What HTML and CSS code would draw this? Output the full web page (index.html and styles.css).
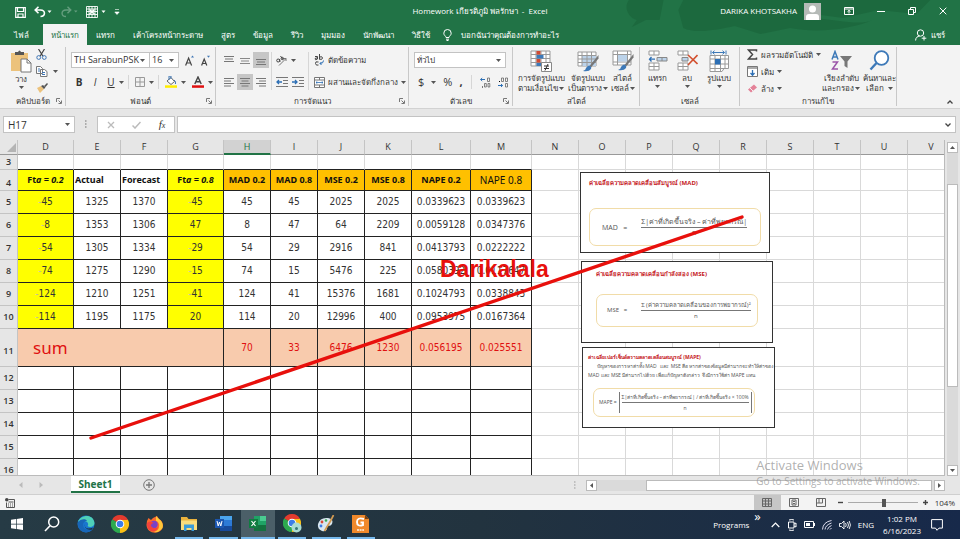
FILE: index.html
```html
<!DOCTYPE html>
<html lang="th">
<head>
<meta charset="utf-8">
<title>Homework - Excel</title>
<link rel="stylesheet" href="styles.css">
</head>
<body>
<svg class="defs" aria-hidden="true">
  <symbol id="caret" viewBox="0 0 5 5"><path d="M0 1h5L2.500 4z" fill="#555"/></symbol>
  <symbol id="launch" viewBox="0 0 6 6"><path d="M.5 4V.5H4M2.500 2.500L5 5M5.500 2.500v3h-3" fill="none" stroke="#777"/></symbol>
  <symbol id="chrome" viewBox="0 0 18 18"><path d="M9 9L1.200 4.500A9 9 0 0 1 16.800 4.500z" fill="#e33b2e"/><path d="M9 9l7.800-4.500A9 9 0 0 1 9 18z" fill="#fbc116"/><path d="M9 9v9A9 9 0 0 1 1.200 4.500z" fill="#2da94f"/><path d="M9 5h7.800L9 18l3.500-7z" fill="#fbc116"/><path d="M1.200 4.500L5.500 11 9 13l-2 4.700A9 9 0 0 1 1.200 4.500z" fill="#2da94f"/><circle cx="9" cy="9" r="4.300" fill="#fff"/><circle cx="9" cy="9" r="3.300" fill="#3c7de8"/></symbol>
</svg>

<header class="top">
  <svg class="clouds" viewBox="0 0 340 45" preserveAspectRatio="none" aria-hidden="true"><path d="M5 0c-6 8 0 18 8 20l-5 7 14-7 14 0 4-20zM60 28c12 6 34 2 52-2l26 8 30-6c30 6 66 0 84-8-14 6-34 0-62-2l4-18H60l-5 10z" fill="#1b653b"/><path d="M190 0h120l-14 14-38-4-36 8-30-4z" fill="#1b653b"/></svg>
  <div class="titlebar">
    <div class="quick">
      <button aria-label="Save"><svg width="11" height="11" viewBox="0 0 11 11"><path d="M.7.7h9.600v9.600H.7zM2.500 1v3.500h6V1M3 10V7h5v3" fill="none" stroke="#fff" stroke-width="1.200"/></svg></button>
      <button aria-label="Undo"><svg width="18" height="12" viewBox="0 0 18 12"><path d="M1 4h5.500C12 4 11.500 10.500 6.500 10.500M4.500.7L1.200 4l3.300 3.300" fill="none" stroke="#fff" stroke-width="1.600"/><path d="M13.500 4.500h4l-2 2.500z" fill="#fff"/></svg></button>
      <button aria-label="Redo"><svg width="18" height="12" viewBox="0 0 18 12"><g opacity=".3"><path d="M11 4H6C.5 4 1 10.500 6 10.500M7.500.7L10.800 4 7.500 7.300" fill="none" stroke="#fff" stroke-width="1.400"/><path d="M14 4.500h3.500l-1.700 2z" fill="#fff"/></g></svg></button>
      <button aria-label="Table"><svg width="20" height="12" viewBox="0 0 20 12"><path d="M.5.500h11v11H.5zM.5 3h11M.5 5.500h11M.5 8.500h11M3 0v12M6 0v12M9 0v12" fill="none" stroke="#fff" stroke-width=".9"/><path d="M3.500 3.500l5 4.500M8.500 3.500l-5 4.500" stroke="#fff" stroke-width="1.500"/><path d="M15.500 4.500h4l-2 2.500z" fill="#fff"/></svg></button>
      <button aria-label="Customize"><svg width="6" height="8" viewBox="0 0 6 8"><path d="M1 1.500h4M.8 4h4.400L3 6.500z" fill="#fff" stroke="#fff" stroke-width=".6"/></svg></button>
    </div>
    <h1>Homework เกียรติภูมิ พลรักษา &nbsp;-&nbsp; Excel</h1>
    <div class="window">
      <span>DARIKA KHOTSAKHA</span>
      <svg width="17" height="17" viewBox="0 0 17 17"><path d="M0 0h17v17H0z" fill="#b5bab7"/><circle cx="8.500" cy="6" r="3.500" fill="#fff"/><path d="M2 17v-3q0-3 3-3h7q3 0 3 3v3z" fill="#fff"/></svg>
      <button aria-label="Ribbon options"><svg width="10" height="8" viewBox="0 0 10 8"><path d="M.5.500h9v7h-9zM.5 2h9M5 6.500V3.500M3.500 4.700L5 3.300l1.500 1.400" fill="none" stroke="#fff"/></svg></button>
      <button aria-label="Minimize"><svg width="8" height="8" viewBox="0 0 8 8"><path d="M0 4.500h8" stroke="#fff"/></svg></button>
      <button aria-label="Restore"><svg width="8" height="8" viewBox="0 0 8 8"><path d="M.5 2.500h5v5h-5zM2.500 2V.5h5v5H6" fill="none" stroke="#fff"/></svg></button>
      <button aria-label="Close"><svg width="8" height="8" viewBox="0 0 8 8"><path d="M.7.7l6.600 6.600M7.300.7L.7 7.300" stroke="#fff"/></svg></button>
    </div>
  </div>
  <nav class="tabs">
    <button class="file">ไฟล์</button><button class="active">หน้าแรก</button><button>แทรก</button><button>เค้าโครงหน้ากระดาษ</button><button>สูตร</button><button>ข้อมูล</button><button>รีวิว</button><button>มุมมอง</button><button>นักพัฒนา</button><button>วิธีใช้</button>
    <button class="tell"><svg width="9" height="12" viewBox="0 0 9 12"><path d="M3 8.500C3 7 .8 6.500.8 4.200a3.700 3.700 0 0 1 7.400 0C8.200 6.500 6 7 6 8.500zM3 10.200h3M3.500 11.500h2" fill="none" stroke="#fff"/></svg>บอกฉันว่าคุณต้องการทำอะไร</button>
    <button class="share"><svg width="12" height="12" viewBox="0 0 12 12"><circle cx="5.500" cy="4" r="3.200" fill="none" stroke="#fff"/><path d="M.6 11.500c0-3 2-4.300 4-4.300M9 7v4.500M6.700 9.200h4.600" fill="none" stroke="#fff"/></svg>แชร์</button>
  </nav>
</header>

<section class="ribbon">
  <div class="group g-clip">
    <div class="body">
      <button class="big"><svg width="22" height="23" viewBox="0 0 22 23"><path d="M1 3h17v18H1z" fill="#ecc27c"/><path d="M5 2h3q1.500-3 3 0h3v3H5z" fill="#555"/><path d="M11 9h6l4 4v9H11z" fill="#fff" stroke="#777"/><path d="M17 9v4h4" fill="none" stroke="#777"/></svg><span>วาง</span><svg class="car"><use href="#caret"/></svg></button>
      <div class="stack">
        <button aria-label="Cut"><svg width="11" height="11" viewBox="0 0 11 11"><path d="M2.500 0l4.300 7M8.500 0L4.200 7" stroke="#444" stroke-width="1.200"/><circle cx="2.700" cy="8.500" r="1.900" fill="none" stroke="#3f76b5"/><circle cx="8.300" cy="8.500" r="1.900" fill="none" stroke="#3f76b5"/></svg></button>
        <button aria-label="Copy"><svg width="12" height="11" viewBox="0 0 12 11"><path d="M.5.500h4l2 2v5h-6zM4.500 3.500h4l2.500 2v5H4.500z" fill="#fff" stroke="#777"/><path d="M2 3h2M2 5h2M6 6.500h3M6 8.500h3" stroke="#3f76b5"/></svg><svg class="car"><use href="#caret"/></svg></button>
        <button aria-label="Format painter"><svg width="12" height="10" viewBox="0 0 12 10"><path d="M1 5l4-2 3 3-4 4z" fill="#ecc27c"/><path d="M5 3l2-1 2.500 2.500-1.500 1.500zM8 3l3-3 1 1-2.500 3z" fill="#555"/></svg></button>
      </div>
    </div>
    <footer>คลิปบอร์ด<svg class="launch"><use href="#launch"/></svg></footer>
  </div>

  <div class="group g-font">
    <div class="body rows">
      <div class="line">
        <label class="combo fontname"><select aria-label="Font"><option>TH SarabunPSK</option></select><svg class="car"><use href="#caret"/></svg></label><label class="combo fontsize"><select aria-label="Font size"><option>16</option></select><svg class="car"><use href="#caret"/></svg></label>
        <button class="grow" aria-label="Grow font"><svg width="9" height="11" viewBox="0 0 9 11"><path d="M.6 10.500L3.600 3l3 7.500M1.700 8h3.800" fill="none" stroke="#444" stroke-width="1.200"/><path d="M6 2.500h3L7.500.500z" fill="#3f76b5"/></svg></button>
        <button aria-label="Shrink font"><svg width="9" height="11" viewBox="0 0 9 11"><path d="M.6 10.500L3.200 4l2.600 6.500M1.500 8.500h3.400" fill="none" stroke="#444" stroke-width="1.200"/><path d="M6 .7h3L7.500 2.700z" fill="#3f76b5"/></svg></button>
      </div>
      <div class="line">
        <button class="letter"><b>B</b></button><button class="letter"><i>I</i></button><button class="letter"><u>U</u></button><svg class="car"><use href="#caret"/></svg><i class="sep"></i>
        <svg class="ic" width="10" height="10" viewBox="0 0 10 10"><path d="M.5.500h9v9h-9zM5 0v10M0 5h10" fill="none" stroke="#999"/></svg><svg class="car"><use href="#caret"/></svg><i class="sep"></i>
        <svg class="ic" width="12" height="12" viewBox="0 0 12 12"><path d="M2 5l4-3.500 3.500 4L6 8.500z" fill="#fff" stroke="#666"/><path d="M4 4V0h2v3M9 4q2 1 1.500 4" fill="none" stroke="#3f76b5"/><path d="M0 9.300h12v2.500H0z" fill="#ffed00"/></svg><svg class="car"><use href="#caret"/></svg>
        <svg class="ic" width="12" height="12" viewBox="0 0 12 12"><path d="M2.800 8L6 1l3.200 7M4 5.700h4" fill="none" stroke="#444" stroke-width="1.400"/><path d="M0 9.300h12v2.500H0z" fill="#e01010"/></svg><svg class="car"><use href="#caret"/></svg>
      </div>
    </div>
    <footer>ฟอนต์<svg class="launch"><use href="#launch"/></svg></footer>
  </div>

  <div class="group g-align">
    <div class="body cols">
      <div class="aligns">
        <button aria-label="Top"><svg width="10" height="10" viewBox="0 0 10 10"><path d="M0 1.500h10M1 4h8M0 6.500h10" stroke="#777"/></svg></button><button aria-label="Middle"><svg width="10" height="10" viewBox="0 0 10 10"><path d="M0 3.500h10M1 6h8M0 8.500h10" stroke="#888"/></svg></button><button class="on" aria-label="Bottom"><svg width="10" height="10" viewBox="0 0 10 10"><path d="M0 4.500h10M1 7h8M0 9.500h10" stroke="#777"/></svg></button>
        <button aria-label="Left"><svg width="10" height="10" viewBox="0 0 10 10"><path d="M0 1.500h10M0 4h7M0 6.500h10M0 9h7" stroke="#777"/></svg></button><button class="on" aria-label="Center"><svg width="10" height="10" viewBox="0 0 10 10"><path d="M0 1.500h10M1.500 4h7M0 6.500h10M1.500 9h7" stroke="#777"/></svg></button><button aria-label="Right"><svg width="10" height="10" viewBox="0 0 10 10"><path d="M0 1.500h10M3 4h7M0 6.500h10M3 9h7" stroke="#777"/></svg></button>
      </div>
      <div class="orient">
        <div><svg width="11" height="11" viewBox="0 0 11 11"><path d="M3 10.500L10 3.500M7.500 3.500H10V6" fill="none" stroke="#777"/><circle cx="2.200" cy="5.500" r="1.500" fill="none" stroke="#444"/><path d="M4 7L3.500 4M4.500 1l2.500 3.500" stroke="#444"/><circle cx="6.300" cy="3.500" r="1.200" fill="none" stroke="#444"/></svg><svg class="car"><use href="#caret"/></svg></div>
        <div><svg width="12" height="10" viewBox="0 0 12 10"><path d="M0 .5h12M7 3.500h5M7 6.500h5M0 9.500h12" stroke="#777"/><path d="M6 5H1M3 3L1 5l2 2" fill="none" stroke="#2c6fb5" stroke-width="1.300"/></svg><svg width="12" height="10" viewBox="0 0 12 10"><path d="M0 .5h12M7 3.500h5M7 6.500h5M0 9.500h12" stroke="#777"/><path d="M0 5h5M3 3l2 2-2 2" fill="none" stroke="#2c6fb5" stroke-width="1.300"/></svg></div>
      </div>
      <div class="wraps">
        <button><svg width="11" height="12" viewBox="0 0 11 12"><path d="M3.500 5V2.500H1M3.500 4Q1 3.500 1 5t2.500 0M5.500 0v5.500M5.500 3q3-1 3 1t-3 1.200M4.500 8Q1 7 1.500 9.500T4.500 11" fill="none" stroke="#444"/><path d="M9.500 6.500q0 3-3.500 3M7.500 8L6 9.500 7.500 11" fill="none" stroke="#2c6fb5"/></svg>ตัดข้อความ</button>
        <button><svg width="11" height="11" viewBox="0 0 11 11"><path d="M.5.500h10v10H.5zM.5 3h10M.5 8h10M5.500.500V3M5.500 8v2.500" fill="#fff" stroke="#777"/><path d="M2 5.500h7M3.300 4.300L2 5.500l1.300 1.200M7.700 4.300L9 5.500 7.700 6.700" fill="none" stroke="#2c6fb5" stroke-width=".8"/></svg>ผสานและจัดกึ่งกลาง<svg class="car"><use href="#caret"/></svg></button>
      </div>
    </div>
    <footer>การจัดแนว<svg class="launch"><use href="#launch"/></svg></footer>
  </div>

  <div class="group g-num">
    <div class="body rows">
      <div class="line"><label class="combo numfmt"><select aria-label="Number format"><option>ทั่วไป</option></select><svg class="car"><use href="#caret"/></svg></label></div>
      <div class="line nums"><button>$</button><svg class="car"><use href="#caret"/></svg><button>%</button><button><b>,</b></button><i class="sep"></i>
        <svg width="11" height="11" viewBox="0 0 11 11"><path d="M5 2.500H.5M2.200 1L.6 2.500 2.200 4" fill="none" stroke="#2c6fb5"/><path d="M7.500 1h2v3.500h-2zM4.500 6.500h1.800v3.500H4.500zM8 6.500h1.800v3.500H8z" fill="none" stroke="#666" stroke-width=".8"/><path d="M2 9.500h1v1H2z"/></svg>
        <svg width="11" height="11" viewBox="0 0 11 11"><path d="M0 8.500h4.500M3 7l1.600 1.500L3 10" fill="none" stroke="#2c6fb5"/><path d="M3.500 1h2v3.500h-2zM7.500 1h2v3.500h-2zM7.500 6.500h2V10h-2z" fill="none" stroke="#666" stroke-width=".8"/><path d="M1 4h1v1H1z"/></svg></div>
    </div>
    <footer>ตัวเลข<svg class="launch"><use href="#launch"/></svg></footer>
  </div>

  <div class="group g-style">
    <div class="body bigs">
      <button class="big"><svg width="22" height="22" viewBox="0 0 22 22"><path d="M1 1h19v15H1zM1 4.500h19M1 8.500h19M1 12.500h19M6 1v15M11 1v15M16 1v15" fill="#fff" stroke="#999"/><path d="M6.500 1h4v3.500h-4zM6.500 9h4v3.500h-4z" fill="#cf4a33"/><path d="M6.500 5h7v3.500h-7zM6.500 13h5v3h-5z" fill="#3d79b8"/><path d="M11.500 12.500h10v9h-10z" fill="#fff" stroke="#888"/><path d="M14 16h5M14 18.500h5M18 14l-3 6.500" stroke="#333"/></svg><span>การจัดรูปแบบ<br>ตามเงื่อนไข<svg class="car"><use href="#caret"/></svg></span></button>
      <button class="big"><svg width="22" height="22" viewBox="0 0 22 22"><path d="M1 2h18v14H1z" fill="#fff" stroke="#999"/><path d="M5 6h14v10H5z" fill="#bcd3ea"/><path d="M1 5.500h18M1 9h18M1 12.500h18M5 2v14M10 2v14M14.500 2v14" stroke="#999" fill="none"/><path d="M21.500 5l-9 11 1.500 1.500 7.500-9z" fill="#777"/><path d="M12 15.500q3 1 2 3.500-2 3-8 2 3-1 3-3 1-2 3-2.500z" fill="#3d79b8"/></svg><span>จัดรูปแบบ<br>เป็นตาราง<svg class="car"><use href="#caret"/></svg></span></button>
      <button class="big"><svg width="22" height="22" viewBox="0 0 22 22"><path d="M1 1h18v14H1zM1 4.500h18M5.500 1v14M1 12h18M15.500 1v14" fill="#fff" stroke="#999"/><path d="M6 5h9v6.500H6z" fill="#bcd3ea"/><path d="M21.500 4l-9 11 1.500 1.500 7.500-9z" fill="#777"/><path d="M12 14.500q3 1 2 3.500-2 3-8 2 3-1 3-3 1-2 3-2.500z" fill="#3d79b8"/></svg><span>สไตล์<br>เซลล์<svg class="car"><use href="#caret"/></svg></span></button>
    </div>
    <footer>สไตล์</footer>
  </div>

  <div class="group g-cell">
    <div class="body bigs">
      <button class="big"><svg width="20" height="22" viewBox="0 0 20 22"><path d="M1 1h10v4H1zM6 1v4M1 13h10v7H1zM6 13v7M1 16.500h10" fill="#fff" stroke="#999"/><path d="M9 7.500h10v3.500H9zM14 7.500V11" fill="#bcd3ea" stroke="#888"/><path d="M7 9.200H1.500M3.500 7L1.500 9.200l2 2.300" fill="none" stroke="#2c6fb5" stroke-width="1.300"/></svg><span>แทรก</span><svg class="car"><use href="#caret"/></svg></button>
      <button class="big"><svg width="21" height="22" viewBox="0 0 21 22"><path d="M1 1h10v4H1zM6 1v4M1 13h10v7H1zM6 13v7M1 16.500h10" fill="#fff" stroke="#999"/><path d="M5 7.500h6V11H5z" fill="#bcd3ea" stroke="#888"/><path d="M11 5l9.500 9M20.500 5L11 15" stroke="#d2502f" stroke-width="1.600"/></svg><span>ลบ</span><svg class="car"><use href="#caret"/></svg></button>
      <button class="big"><svg width="22" height="22" viewBox="0 0 22 22"><path d="M2 5.500h18.500v13H2zM2 9h18.500M2 14h18.500M7 5v16M12.500 5v16M17 5v13M2 18.500v3h12l2-3" fill="#fff" stroke="#999"/><path d="M7 9h5.500v5.500H7z" fill="#2c6fb5"/><path d="M3 .5v4M18 .5v4M4.500 2.500h12M6.500.700l-2 1.800 2 1.800M14.500.700l2 1.800-2 1.800" fill="none" stroke="#3d79b8"/></svg><span>รูปแบบ</span><svg class="car"><use href="#caret"/></svg></button>
    </div>
    <footer>เซลล์</footer>
  </div>

  <div class="group g-edit">
    <div class="body cols">
      <div class="edits">
        <button><svg width="11" height="11" viewBox="0 0 11 11"><path d="M9.500 2.500V1H1.500l4 4.500-4 4.500h8V8.500" fill="none" stroke="#444" stroke-width="1.500"/></svg>ผลรวมอัตโนมัติ<svg class="car"><use href="#caret"/></svg></button>
        <button><svg width="11" height="11" viewBox="0 0 11 11"><path d="M.5.500h10v10H.5z" fill="#fff" stroke="#777"/><path d="M1 1h9v2H1z" fill="#aaa"/><path d="M5.500 4v5M3.500 7l2 2.200 2-2.200" fill="none" stroke="#2c6fb5" stroke-width="1.300"/></svg>เติม<svg class="car"><use href="#caret"/></svg></button>
        <button><svg width="11" height="9" viewBox="0 0 11 9"><path d="M1 5.500L7 .5l3 3-6 5z" fill="#e48298"/><path d="M3 4l3 3" stroke="#f3f3f3"/></svg>ล้าง<svg class="car"><use href="#caret"/></svg></button>
      </div>
      <button class="big"><svg width="21" height="22" viewBox="0 0 21 22"><path d="M1 9.500L4 1.500l3 8M2 7h4" fill="none" stroke="#3d79b8" stroke-width="1.500"/><path d="M1.500 12h5L1.500 19h5.500" fill="none" stroke="#9a55a8" stroke-width="1.500"/><path d="M9 6h12l-4.500 5.500V18l-3-2v-4.500z" fill="#777"/></svg><span>เรียงลำดับ<br>และกรอง<svg class="car"><use href="#caret"/></svg></span></button>
      <button class="big"><svg width="21" height="22" viewBox="0 0 21 22"><circle cx="12.500" cy="8" r="6.800" fill="#fff" stroke="#3d79b8" stroke-width="1.800"/><path d="M7.500 13l-6 6.500" stroke="#3d79b8" stroke-width="2.400"/></svg><span>ค้นหาและ<br>เลือก <svg class="car"><use href="#caret"/></svg></span></button>
    </div>
    <footer>การแก้ไข</footer>
  </div>
  <button class="collapse" aria-label="Collapse ribbon"><svg width="6" height="4" viewBox="0 0 6 4"><path d="M.5 3.500L3 1l2.500 2.500" fill="none" stroke="#444" stroke-width="1.300"/></svg></button>
</section>

<section class="formula">
  <label class="combo namebox"><input aria-label="Name box" value="H17"><svg class="car"><use href="#caret"/></svg></label>
  <svg class="dots" width="2" height="10" viewBox="0 0 2 10"><path d="M0 1h1.500M0 4h1.500M0 7h1.500" stroke="#999" stroke-width="1.500"/></svg>
  <div class="fx"><svg width="8" height="8" viewBox="0 0 8 8"><path d="M1 1l6 6M7 1L1 7" stroke="#bbb" stroke-width="1.300"/></svg><svg width="9" height="8" viewBox="0 0 9 8"><path d="M.5 4.500L3 7l5.500-6" fill="none" stroke="#bbb" stroke-width="1.500"/></svg><button><i>f<small>x</small></i></button></div>
  <label class="combo bar"><input aria-label="Formula bar"><svg width="6" height="4" viewBox="0 0 6 4"><path d="M.5.500L3 3 5.500.500" fill="none" stroke="#444" stroke-width="1.300"/></svg></label>
</section>

<main class="work">
  <div class="sheet">
    <table>
      <colgroup><col class="cr"><col class="cd"><col span="2" class="c"><col class="cg"><col span="4" class="c"><col class="cl"><col class="cm"><col span="9" class="c"></colgroup>
      <thead><tr><th class="corner"><svg width="9" height="9" viewBox="0 0 9 9"><path d="M9 0v9H0z" fill="#b4b4b4"/></svg></th><th>D</th><th>E</th><th>F</th><th>G</th><th class="sel">H</th><th>I</th><th>J</th><th>K</th><th>L</th><th>M</th><th>N</th><th>O</th><th>P</th><th>Q</th><th>R</th><th>S</th><th>T</th><th>U</th><th>V</th></tr></thead>
      <tbody>
      <tr class="r3"><th>3</th><td><td><td><td><td><td><td><td><td><td><td><td><td><td><td><td><td><td><td></tr>
      <tr class="r4"><th>4</th><td class="y">Ft<i>a = 0.2</i><td class="l">Actual<td class="l">Forecast<td class="y">Ft<i>a = 0.8</i><td class="o">MAD 0.2<td class="o">MAD 0.8<td class="o">MSE 0.2<td class="o">MSE 0.8<td class="o">NAPE 0.2<td class="o plain">NAPE 0.8<td><td><td><td><td><td><td><td><td></tr>
      <tr><th>5</th><td class="y"><s>-</s>45<td>1325<td>1370<td class="y"><s>-</s>45<td>45<td>45<td>2025<td>2025<td>0.0339623<td>0.0339623<td><td><td><td><td><td><td><td><td></tr>
      <tr><th>6</th><td class="y"><s>-</s>8<td>1353<td>1306<td class="y">47<td>8<td>47<td>64<td>2209<td>0.0059128<td>0.0347376<td><td><td><td><td><td><td><td><td></tr>
      <tr><th>7</th><td class="y"><s>-</s>54<td>1305<td>1334<td class="y"><s>-</s>29<td>54<td>29<td>2916<td>841<td>0.0413793<td>0.0222222<td><td><td><td><td><td><td><td><td></tr>
      <tr><th>8</th><td class="y"><s>-</s>74<td>1275<td>1290<td class="y"><s>-</s>15<td>74<td>15<td>5476<td>225<td>0.0580392<td>0.0117647<td><td><td><td><td><td><td><td><td></tr>
      <tr><th>9</th><td class="y"><s>-</s>124<td>1210<td>1251<td class="y"><s>-</s>41<td>124<td>41<td>15376<td>1681<td>0.1024793<td>0.0338843<td><td><td><td><td><td><td><td><td></tr>
      <tr><th>10</th><td class="y"><s>-</s>114<td>1195<td>1175<td class="y">20<td>114<td>20<td>12996<td>400<td>0.0953975<td>0.0167364<td><td><td><td><td><td><td><td><td></tr>
      <tr class="sum"><th>11</th><td colspan="4" class="p name">sum<td class="p">70<td class="p">33<td class="p">6476<td class="p">1230<td class="p">0.056195<td class="p">0.025551<td class="n"><td class="n"><td class="n"><td class="n"><td class="n"><td class="n"><td class="n"><td class="n"><td class="n"></tr>
      <tr><th>12</th><td><td><td><td><td><td><td><td><td><td><td><td><td><td><td><td><td><td><td></tr>
      <tr><th>13</th><td><td><td><td><td><td><td><td><td><td><td><td><td><td><td><td><td><td><td></tr>
      <tr><th>14</th><td><td><td><td><td><td><td><td><td><td><td><td><td><td><td><td><td><td><td></tr>
      <tr><th>15</th><td><td><td><td><td><td><td><td><td><td><td><td><td><td><td><td><td><td><td></tr>
      <tr><th>16</th><td><td><td><td><td><td><td><td><td><td><td><td><td><td><td><td><td><td><td></tr>
      </tbody>
    </table>
    <figure class="card mad"><figcaption>ค่าเฉลี่ยความคลาดเคลื่อนสัมบูรณ์ (MAD)</figcaption><div class="eq"><span>MAD &nbsp; =</span><span class="frac"><span>Σ|ค่าที่เกิดขึ้นจริง – ค่าที่พยากรณ์|</span><span>n</span></span></div></figure>
    <figure class="card mse"><figcaption>ค่าเฉลี่ยความคลาดเคลื่อนกำลังสอง (MSE)</figcaption><div class="eq"><span>MSE &nbsp; =</span><span class="frac"><span>Σ (ค่าความคลาดเคลื่อนของการพยากรณ์)²</span><span>n</span></span></div></figure>
    <figure class="card mape"><figcaption>ค่าเฉลี่ยเปอร์เซ็นต์ความคลาดเคลื่อนสมบูรณ์ (MAPE)</figcaption><p>ปัญหาของการหาค่าทั้ง MAD &nbsp; และ MSE คือ หากค่าของข้อมูลมีค่ามากจะทำให้ค่าของ<br>MAD และ MSE มีค่ามากไปด้วย เพื่อแก้ปัญหาดังกล่าว จึงมีการใช้ค่า MAPE แทน</p><div class="eq"><span>MAPE =</span><span class="frac bracket"><span>Σ|ค่าที่เกิดขึ้นจริง – ค่าที่พยากรณ์| / ค่าที่เกิดขึ้นจริง × 100%</span><span>n</span></span></div></figure>
    <strong class="mark">Darikalala</strong>
    <svg class="stroke" width="660" height="230" viewBox="0 0 660 230"><path d="M5 226L656 5" stroke="#e8100c" stroke-width="3.400" stroke-linecap="round"/></svg>
  </div>
  <div class="vscroll"><button aria-label="Scroll up"><svg width="5" height="3" viewBox="0 0 5 3"><path d="M0 3h5L2.500 0z" fill="#555"/></svg></button><span class="track"></span><span class="thumb"></span><button aria-label="Scroll down"><svg width="5" height="3" viewBox="0 0 5 3"><path d="M0 0h5L2.500 3z" fill="#555"/></svg></button></div>
</main>

<section class="sheets">
  <div class="arrows"><svg width="4" height="6" viewBox="0 0 4 6"><path d="M3.500 0v6L0 3z" fill="#bbb"/></svg><svg width="4" height="6" viewBox="0 0 4 6"><path d="M.5 0v6L4 3z" fill="#bbb"/></svg></div>
  <button class="tab">Sheet1</button>
  <button class="add" aria-label="New sheet"><svg width="12" height="12" viewBox="0 0 12 12"><circle cx="6" cy="6" r="5.300" fill="none" stroke="#777"/><path d="M6 3v6M3 6h6" stroke="#777" stroke-width="1.300"/></svg></button>
  <svg class="dots" width="2" height="10" viewBox="0 0 2 10"><path d="M0 2h1.500M0 5h1.500M0 8h1.500" stroke="#999"/></svg>
  <div class="hscroll"><button aria-label="Scroll left"><svg width="3" height="5" viewBox="0 0 3 5"><path d="M3 0v5L0 2.500z" fill="#555"/></svg></button><span class="track"></span><span class="thumb"></span><button aria-label="Scroll right"><svg width="3" height="5" viewBox="0 0 3 5"><path d="M0 0v5l3-2.500z" fill="#555"/></svg></button></div>
</section>

<section class="status">
  <svg class="rec" width="10" height="10" viewBox="0 0 10 10"><path d="M3.500 1.500h6v8h-8v-5M3.500 4h5M3 6h1M5 6h1M7 6h1M3 8h1M5 8h1M7 8h1" fill="none" stroke="#555"/><circle cx="1.800" cy="1.800" r="1.800" fill="#444"/></svg>
  <div class="views">
    <button class="on" aria-label="Normal"><svg width="10" height="9" viewBox="0 0 10 9"><path d="M.5.500h9v8h-9zM.5 3h9M.5 6h9M3.500.500v8M6.500.500v8" fill="none" stroke="#666"/></svg></button>
    <button aria-label="Page layout"><svg width="10" height="9" viewBox="0 0 10 9"><path d="M.5.500h9v8h-9zM3 2h4v5H3zM4 3.500h2M4 5.500h2" fill="none" stroke="#666"/></svg></button>
    <button aria-label="Page break"><svg width="10" height="9" viewBox="0 0 10 9"><path d="M.5.500h9v8h-9zM3 .5v4.500M6.500.500v4.500h-6" fill="none" stroke="#666"/></svg></button>
  </div>
  <div class="zoom"><button aria-label="Zoom out"><svg width="5" height="5" viewBox="0 0 5 5"><path d="M0 2.500h5" stroke="#444" stroke-width="1.400"/></svg></button><input type="range" aria-label="Zoom" min="0" max="100" value="52"><button aria-label="Zoom in"><svg width="5" height="5" viewBox="0 0 5 5"><path d="M0 2.500h5M2.500 0v5" stroke="#444" stroke-width="1.400"/></svg></button><span>104%</span></div>
</section>

<nav class="taskbar">
  <div class="apps">
    <button aria-label="Start"><svg width="12" height="12" viewBox="0 0 12 12"><path d="M0 1.700l5-.7v4.700H0zM5.700.900L12 0v5.700H5.700zM0 6.400h5V11l-5-.7zM5.700 6.400H12V12l-6.300-.9z" fill="#fff"/></svg></button>
    <button aria-label="Search"><svg width="16" height="16" viewBox="0 0 16 16"><circle cx="9.700" cy="6" r="5" fill="none" stroke="#fff" stroke-width="1.500"/><path d="M6 9.800L1 15" stroke="#fff" stroke-width="1.600"/></svg></button>
    <button aria-label="Edge"><svg width="18" height="18" viewBox="0 0 18 18"><circle cx="9" cy="9" r="8.500" fill="#1976cf"/><path d="M1 7C3 0 16-2 17.500 8c0 4-5 5-7 3 2-3-1-5-4-5-2 0-4 0-5.500 1z" fill="#4fd0b8"/><path d="M1 7c2-3 8-4 9-1-4 0-5 4-3 7 2 2 6 2 9 .5-2 4-8 5-12 2Q0 12 1 7z" fill="#1766b8"/><path d="M8 9q-1 4 3 4.500 3 0 5-1l-1 2q-4 1-7-2z" fill="#1a3346"/></svg></button>
    <button aria-label="Chrome"><svg width="18" height="18"><use href="#chrome"/></svg></button>
    <button aria-label="Firefox"><svg width="17" height="18" viewBox="0 0 17 18"><path d="M1 6l1.500-3L5 5l2-2 4-2 2 3q4 2 4 7c-1 9-16 9-16.500-1z" fill="#fb6b2d"/><path d="M10 1l3 3q5 4 3.500 9Q13 18 8 17q6-2 5-8-1-3-3-3z" fill="#ffc93a"/><circle cx="8" cy="9.500" r="3.700" fill="#7842c8"/><path d="M1 8q3-3 7 0-3 0-3 3 3 4 7 1-1 5-7 4-5-3-4-8z" fill="#f4433c"/></svg></button>
    <button class="run" aria-label="Files"><svg width="16" height="14" viewBox="0 0 16 14"><path d="M0 0h6l1.500 2H16v11H0z" fill="#e9b23d"/><path d="M0 3.500h16V13H0z" fill="#fbdc7c"/><path d="M3 7.500h10V14h-2.500v-3h-5v3H3z" fill="#3b9bd8"/></svg></button>
    <button class="run" aria-label="Word"><svg width="17" height="15" viewBox="0 0 17 15"><path d="M5 0h12v15H5z" fill="#2d7ad6"/><path d="M5 0h12v4H5z" fill="#4aa5ee"/><path d="M5 10h12v5H5z" fill="#174a9c"/><path d="M0 3h9v9H0z" fill="#1b56b0"/><path d="M2 5l1.200 5L4.500 6l1.300 4L7 5" fill="none" stroke="#fff"/></svg></button>
    <button class="run now" aria-label="Excel"><svg width="17" height="15" viewBox="0 0 17 15"><path d="M5 0h12v15H5z" fill="#20a366"/><path d="M11 0h6v5h-6z" fill="#4acb91"/><path d="M5 9h12v6H5z" fill="#14713f"/><path d="M0 3h9v9H0z" fill="#107c41"/><path d="M2.500 5l4 5M6.500 5l-4 5" fill="none" stroke="#fff" stroke-width="1.200"/></svg></button>
    <button class="run" aria-label="Chrome profile"><svg width="19" height="19" viewBox="0 0 19 19"><use href="#chrome" width="18" height="18"/><circle cx="13.500" cy="13.500" r="5" fill="#a9dcd3"/><circle cx="13.500" cy="14.500" r="1.500" fill="#377"/></svg></button>
    <button class="run" aria-label="Paint"><svg width="18" height="17" viewBox="0 0 18 17"><path d="M1 9q2-7 10-6 6 1 4 6-1 2-4 2-2 0-1 3-1 3-5 2Q0 14 1 9z" fill="#d7e6ef"/><circle cx="5" cy="7" r="1.400" fill="#d94a38"/><circle cx="9" cy="5.500" r="1.300" fill="#35a853"/><circle cx="4" cy="11" r="1.400" fill="#3c7de8"/><path d="M16.500 0l-3 6-6 10" stroke="#d19a52" stroke-width="1.700" fill="none"/></svg></button>
    <button class="run" aria-label="PDF"><svg width="17" height="18" viewBox="0 0 17 18"><path d="M0 0h13l4 4v14H0z" fill="#f0892b"/><path d="M13 0v4h4z" fill="#794012"/><path d="M12 4Q5 2 5 7t6 3V7.500H8.500" fill="none" stroke="#fff" stroke-width="1.900"/><path d="M5 15h7" stroke="#fbd9b5" stroke-width="2" stroke-dasharray="2 .6"/></svg></button>
  </div>
  <div class="tray">
    <span>Programs</span><span class="more">»</span>
    <svg width="9" height="6" viewBox="0 0 9 6"><path d="M.7 5L4.500 1l3.800 4" fill="none" stroke="#fff" stroke-width="1.200"/></svg>
    <svg width="10" height="12" viewBox="0 0 10 12"><path d="M1.500 3h5.500v6H1.500zM7 5l2-1v4L7 7M2 1q3-1 5 0M2 11q3 1 5 0" fill="none" stroke="#fff"/></svg>
    <svg width="11" height="7" viewBox="0 0 11 7"><path d="M.5.500h9v6h-9z" fill="none" stroke="#fff"/><path d="M2 2h4v3H2zM10 2h1v3h-1z" fill="#fff"/></svg>
    <svg width="10" height="10" viewBox="0 0 10 10"><path d="M.5 9.500Q1 2 9.500.500M3 9.500Q3.500 5 9.500 3M5.500 9.500Q6 7 9.500 5.500M8 9.500l1.500-1.500" fill="none" stroke="#dde"/></svg>
    <svg width="12" height="10" viewBox="0 0 12 10"><path d="M.5 3.500h2L5 1v8L2.500 6.500h-2zM6.500 3q1.500 2 0 4M8.500 2q2 3 0 6M10.200 1q2.500 4 0 8" fill="none" stroke="#fff" stroke-width=".9"/></svg>
    <span>ENG</span>
    <time>1:02 PM<br>6/16/2023</time>
    <svg class="note" width="12" height="12" viewBox="0 0 12 12"><path d="M.6.600h10.800v8.500H8L6 11.300 4.500 9.100H.6z" fill="none" stroke="#fff"/></svg>
  </div>
</nav>
<aside class="activate"><b>Activate Windows</b><span>Go to Settings to activate Windows.</span></aside>
</body>
</html>
```

FILE: styles.css
```css
* { box-sizing: border-box; }
body { margin: 0; height: 100vh; display: flex; flex-direction: column; overflow: hidden; position: relative; background: #e6e6e6; color: #333; font: 8px/10px "Open Sans", "Noto Sans", sans-serif; }
svg { display: block; flex: none; }
.defs { position: absolute; width: 0; height: 0; }
button, input, select { font: inherit; color: inherit; background: none; border: 0; padding: 0; margin: 0; }
button { display: flex; align-items: center; justify-content: center; white-space: nowrap; }
input, select { min-width: 0; width: 100%; outline: 0; }
select { appearance: none; }
.car { width: 5px; height: 5px; }

.top { position: relative; background: #217346; color: #fff; height: 45px; display: flex; flex-direction: column; justify-content: space-between; }
.clouds { position: absolute; right: 0; top: 0; width: 35%; height: 100%; opacity: .7; }
.titlebar { position: relative; height: 22px; display: grid; grid-template-columns: 1fr auto 1fr; align-items: center; }
.quick { display: flex; align-items: center; gap: 8px; padding: 2px 0 0 15px; }
.titlebar h1 { margin: 0; font-size: 8px; font-weight: 400; }
.window { display: flex; align-items: center; justify-content: flex-end; gap: 23px; padding-right: 13px; font-size: 8px; }
.window span { margin-right: -16px; }
.tabs { position: relative; display: flex; height: 21px; }
.tabs button { padding: 0 9px; }
.tabs .file { padding: 0 14px; }
.tabs .active { background: #f3f3f3; color: #217346; padding: 0 8px; }
.tabs .tell { gap: 9px; padding-left: 4px; }
.tabs .share { margin-left: auto; gap: 4px; padding-right: 15px; }

.ribbon { display: flex; background: #f3f3f3; height: 64px; border-bottom: 1px solid #d2d2d2; }
.group { position: relative; display: flex; flex-direction: column; border-right: 1px solid #c8c8c8; margin: 2px 0; }
.group .body { flex: 1; display: flex; }
.group footer { position: relative; text-align: center; }
.launch { position: absolute; right: 3px; top: 2px; width: 6px; height: 6px; }
.g-clip { width: 66px; }
.g-font { width: 150px; }
.g-align { width: 193px; }
.g-num { width: 104px; }
.g-style { width: 127px; }
.g-cell { width: 100px; }
.g-edit { width: 157px; }
.big { flex-direction: column; justify-content: flex-start; gap: 1px; padding-top: 3px; }
.big span .car { display: inline-block; margin-left: 1px; }
.g-clip .body { padding-left: 10px; gap: 4px; }
.stack { display: flex; flex-direction: column; justify-content: space-between; align-items: flex-start; padding: 2px 0 3px; }
.stack button { gap: 5px; }
.rows { flex-direction: column; padding: 5px 5px 0; gap: 6px; }
.line { display: flex; align-items: center; height: 16px; }
.combo { display: flex; align-items: center; height: 16px; padding: 0 4px 0 2px; background: #fff; border: 1px solid #c3c3c3; }
.fontname { width: 79px; font-size: 9px; }
.fontsize { width: 30px; font-size: 9px; margin-left: -1px; }
.numfmt { width: 92px; }
.grow { margin: 0 7px 0 6px; }
.letter { flex: none; width: 16px; font-size: 10px; }
.sep { flex: none; width: 1px; height: 14px; background: #d6d6d6; margin: 0 4px; }
.line .sep + .ic { margin-left: 2px; }
.ic { margin-right: 4px; }
.car + .ic { margin-left: 6px; }
.cols { padding-top: 5px; }
.aligns { display: grid; grid-template-columns: repeat(3, 16px); grid-auto-rows: 16px; row-gap: 6px; padding-left: 5px; box-sizing: content-box; }
.aligns .on, .views .on { background: #c6c6c6; }
.orient { display: flex; flex-direction: column; gap: 6px; margin-left: 2px; padding-left: 4px; border-left: 1px solid #d6d6d6; height: 38px; width: 37px; }
.orient div { height: 16px; display: flex; align-items: center; gap: 4px; }
.wraps { display: flex; flex-direction: column; align-items: flex-start; gap: 6px; padding-left: 5px; border-left: 1px solid #d6d6d6; height: 38px; }
.wraps button { height: 16px; gap: 3px; }
.nums { gap: 7px; padding-left: 4px; font-size: 11px; }
.nums .sep { margin: 0 1px; }
.bigs { justify-content: space-around; padding: 0 3px; }
.g-edit .cols { padding-top: 0; gap: 3px; }
.edits { display: flex; flex-direction: column; gap: 6px; padding: 2px 0 0 7px; width: 79px; align-items: flex-start; }
.edits button { gap: 3px; height: 11px; }
.collapse { margin: auto 7px 4px auto; }

.formula { display: flex; align-items: center; height: 31px; padding: 0 4px 0 3px; }
.namebox { width: 72px; font-size: 10px; padding-left: 4px; height: 17px; }
.formula .dots { margin: 0 10px; }
.fx { display: flex; align-items: center; justify-content: space-around; width: 78px; height: 17px; background: #fff; border: 1px solid #c3c3c3; font: 11px/12px "Liberation Serif", serif; margin-right: 2px; }
.fx small { font-size: 8px; }
.bar { flex: 1; height: 17px; }

.work { flex: 1; min-height: 0; display: flex; gap: 2px; padding-right: 2px; }
.sheet { position: relative; flex: 1; min-width: 0; overflow: hidden; background: #fff; border-right: 1px solid #bbb; border-bottom: 1px solid #bbb; }
table { table-layout: fixed; width: 955px; border-collapse: separate; border-spacing: 0; font: 10px/14px "DejaVu Sans Condensed", sans-serif; color: #333; }
.cr { width: 18px; } .cd { width: 56px; } .c { width: 47px; } .cg { width: 56px; } .cl { width: 59px; } .cm { width: 61px; }
th, td { padding: 0; height: 23px; text-align: center; border: 0 solid #d9d9d9; border-width: 0 1px 1px 0; white-space: nowrap; }
th { background: #e6e6e6; color: #333; font: 9px/10px "Open Sans", sans-serif; border-color: #c4c4c4; }
tbody th { font-weight: 600; }
thead th { height: 15px; border-bottom-color: #999; }
.corner svg { margin-left: 7px; }
thead .sel { background: #d2d2d2; color: #217346; border-bottom: 2px solid #217346; }
.r3 td, .r3 th { height: 15px; }
.r4 td, .r4 th { height: 21px; }
.r4 th { vertical-align: bottom; padding-bottom: 2px; }
.r4 td { font: bold 9px/12px "Noto Sans", sans-serif; color: #111; }
.r4 .l { text-align: left; padding-left: 1px; }
.r4 .plain { font-weight: 400; font-size: 10px; }
.r3 td:nth-child(-n+11) { border-bottom-color: #222; }
tr:not(.r3) td:nth-child(-n+11):not(.n) { border-color: #222; }
.y { background: #ff0; }
.o { background: #ffc000; }
s { color: #bba; text-decoration: none; }
.sum td, .sum th { height: 38px; }
.sum th { vertical-align: bottom; padding-bottom: 10px; }
td.p { background: #f8cbad; color: #e01010; }
td.name { text-align: left; padding-left: 15px; font: 17px/20px "Noto Sans", sans-serif; }

.card { position: absolute; margin: 0; background: #fff; border: 1px solid #333; color: #555; font-size: 6px; line-height: 9px; white-space: nowrap; }
.card figcaption { color: #c4161c; font-weight: 700; }
.card p { margin: 0 0 8px; text-indent: 9px; font-size: 5px; }
.eq { display: flex; align-items: center; gap: 14px; border: 1px solid #f1dca8; border-radius: 7px; padding: 0 5px; }
.frac { display: flex; flex-direction: column; text-align: center; line-height: 10px; }
.frac span:first-child { border-bottom: 1px solid #777; }
.mad { left: 580px; top: 32px; width: 190px; height: 81px; padding: 6px 8px; }
.mad .eq { height: 38px; margin-top: 20px; font-size: 7px; padding-left: 12px; }
.mse { left: 581px; top: 121px; width: 192px; height: 82px; padding: 8px 14px; }
.mse .eq { height: 33px; margin-top: 15px; padding: 0 10px; }
.mape { left: 582px; top: 207px; width: 193px; height: 81px; padding: 5px; font-size: 5px; }
.mape .eq { height: 29px; margin: 0 14px 0 5px; gap: 2px; }
.bracket { border: solid #777; border-width: 0 1px; padding: 0 2px; }
.mark { position: absolute; left: 440px; top: 117px; color: #e8100c; font: bold 23px/24px "Liberation Sans", sans-serif; }
.stroke { position: absolute; left: 86px; top: 72px; }

.vscroll { width: 11px; display: flex; flex-direction: column; background: #dadada; margin: 2px 0 0; }
.vscroll button, .hscroll button { background: #fff; border: 1px solid #bbb; width: 11px; height: 11px; }
.vscroll .track { height: 31px; }
.vscroll .thumb { flex: 1; background: #fff; border: 1px solid #bbb; margin-bottom: 78px; }

.sheets { display: flex; align-items: center; height: 19px; padding-right: 15px; border-bottom: 1px solid #cfcfcf; }
.arrows { display: flex; gap: 16px; padding: 0 28px 0 19px; }
.sheets .tab { align-self: flex-start; width: 49px; height: 17px; background: #fff; border-bottom: 2px solid #217346; color: #217346; font: bold 10px/12px "Noto Sans", sans-serif; }
.add { margin: 0 auto 0 23px; }
.sheets .dots { margin-right: 10px; }
.hscroll { width: 38%; display: flex; background: #dadada; }
.hscroll .track { width: 49px; }
.hscroll .thumb { flex: 1; background: #fff; border: 1px solid #bbb; margin-right: 2px; }

.status { display: flex; align-items: center; justify-content: flex-end; height: 15px; background: #f3f3f3; padding: 0 5px; }
.rec { margin-right: auto; }
.views { display: flex; align-self: stretch; margin-right: 3px; }
.views button { width: 27px; }
.zoom { display: flex; align-items: center; gap: 5px; }
.zoom span { margin-left: 2px; }
.zoom input { appearance: none; width: 70px; height: 9px; background: linear-gradient(#aaa, #aaa) center / 100% 1px no-repeat; }
.zoom input::-webkit-slider-thumb { appearance: none; width: 4px; height: 8px; background: #555; }

.taskbar { display: flex; justify-content: space-between; height: 29px; background: linear-gradient(90deg, #263b45, #22333f 50%, #17294a); color: #fff; font-size: 8px; line-height: 12px; }
.apps { display: grid; grid-template-columns: repeat(11, 1fr); width: 378px; }
.apps button { border-bottom: 2px solid transparent; }
.apps .run { border-bottom-color: #76b9ed; margin: 0 3px; }
.apps .now { background: #4b5f68; margin: 0; }
.tray { display: flex; align-items: center; gap: 7px; padding-right: 17px; }
.tray .more { font-size: 13px; align-self: flex-start; margin: 0 3px 0 -2px; }
.tray time { text-align: center; margin: 0 3px 0 2px; }
.tray .note { margin-top: 1px; }
.activate { position: absolute; right: 40px; bottom: 51px; display: flex; flex-direction: column; color: rgba(150, 150, 150, .75); pointer-events: none; font-size: 10px; line-height: 14px; }
.activate b { font-size: 13px; line-height: 18px; font-weight: 400; }
```
